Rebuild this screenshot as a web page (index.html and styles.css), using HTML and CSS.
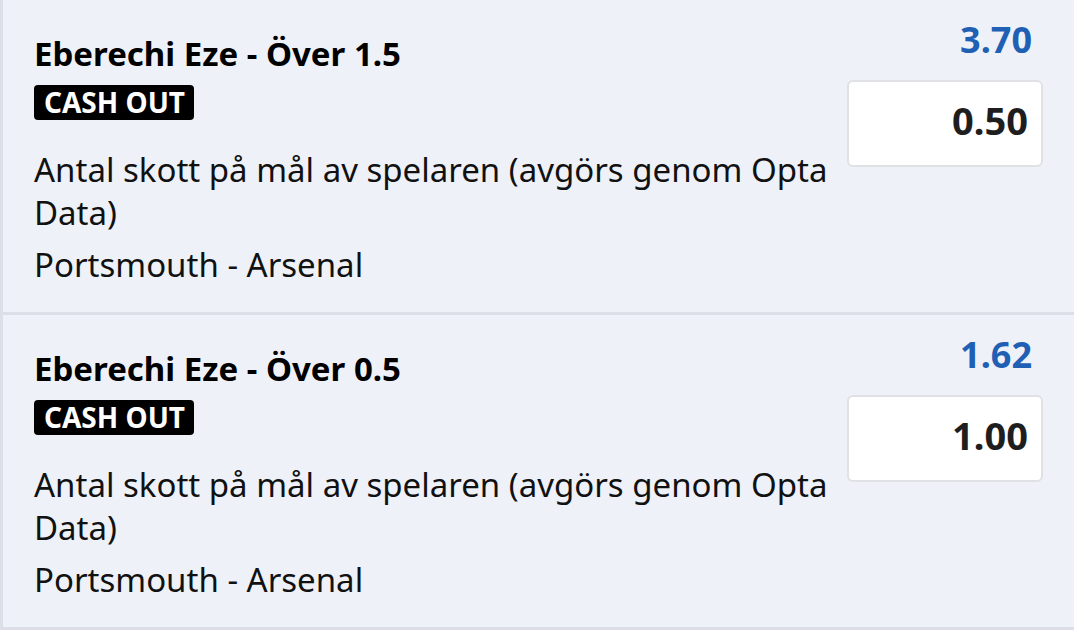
FILE: index.html
```html
<!DOCTYPE html>
<html lang="sv">
<head>
<meta charset="utf-8">
<title>Bets</title>
<link rel="stylesheet" href="styles.css">
</head>
<body>
<div class="slip">
  <div class="bet">
    <div class="info">
      <div class="title">Eberechi Eze - Över 1.5</div>
      <div class="badge">CASH OUT</div>
      <div class="desc">Antal skott på mål av spelaren (avgörs genom Opta Data)</div>
      <div class="match">Portsmouth - Arsenal</div>
    </div>
    <div class="side">
      <div class="odds">3.70</div>
      <div class="stake">0.50</div>
    </div>
  </div>
  <div class="bet">
    <div class="info">
      <div class="title">Eberechi Eze - Över 0.5</div>
      <div class="badge">CASH OUT</div>
      <div class="desc">Antal skott på mål av spelaren (avgörs genom Opta Data)</div>
      <div class="match">Portsmouth - Arsenal</div>
    </div>
    <div class="side">
      <div class="odds">1.62</div>
      <div class="stake">1.00</div>
    </div>
  </div>
</div>
</body>
</html>
```
FILE: styles.css
```css
* { box-sizing: border-box; }
html, body { margin: 0; padding: 0; }
body {
  background: #eef1f8;
  font-family: "Noto Sans", "Open Sans", sans-serif;
  color: #000;
  width: 1074px;
  height: 630px;
  overflow: hidden;
}
.slip {
  border-left: 3px solid #dcdfe7;
}
.bet {
  display: flex;
  height: 315px;
  border-bottom: 3px solid #dcdfe7;
  padding: 24px 31px 0 31px;
}
.info {
  flex: 1;
  min-width: 0;
  padding-top: 10px;
}
.title {
  font-weight: 700;
  font-size: 33px;
  line-height: 40px;
}
.badge {
  display: inline-block;
  background: #000;
  color: #fff;
  font-weight: 700;
  font-size: 28px;
  line-height: 35px;
  height: 35px;
  padding: 0 9px 0 10px;
  border-radius: 4px;
  margin-top: 11px;
}
.desc {
  font-size: 33px;
  line-height: 43px;
  margin-top: 28px;
  max-width: 800px;
  color: #111;
}
.match {
  font-size: 33px;
  line-height: 43px;
  margin-top: 9px;
  color: #111;
}
.side {
  width: 196px;
  flex: none;
  display: flex;
  flex-direction: column;
  align-items: stretch;
}
.odds {
  text-align: right;
  color: #1f5fb4;
  font-weight: 700;
  font-size: 36px;
  line-height: 32px;
  padding-right: 11px;
}
.stake {
  margin-top: 24px;
  height: 87px;
  background: #fff;
  border: 2px solid #dfe1e5;
  border-radius: 6px;
  text-align: right;
  font-weight: 700;
  font-size: 38px;
  line-height: 76px;
  padding: 0 13px 7px 0;
  color: #1e1e1e;
}
```
